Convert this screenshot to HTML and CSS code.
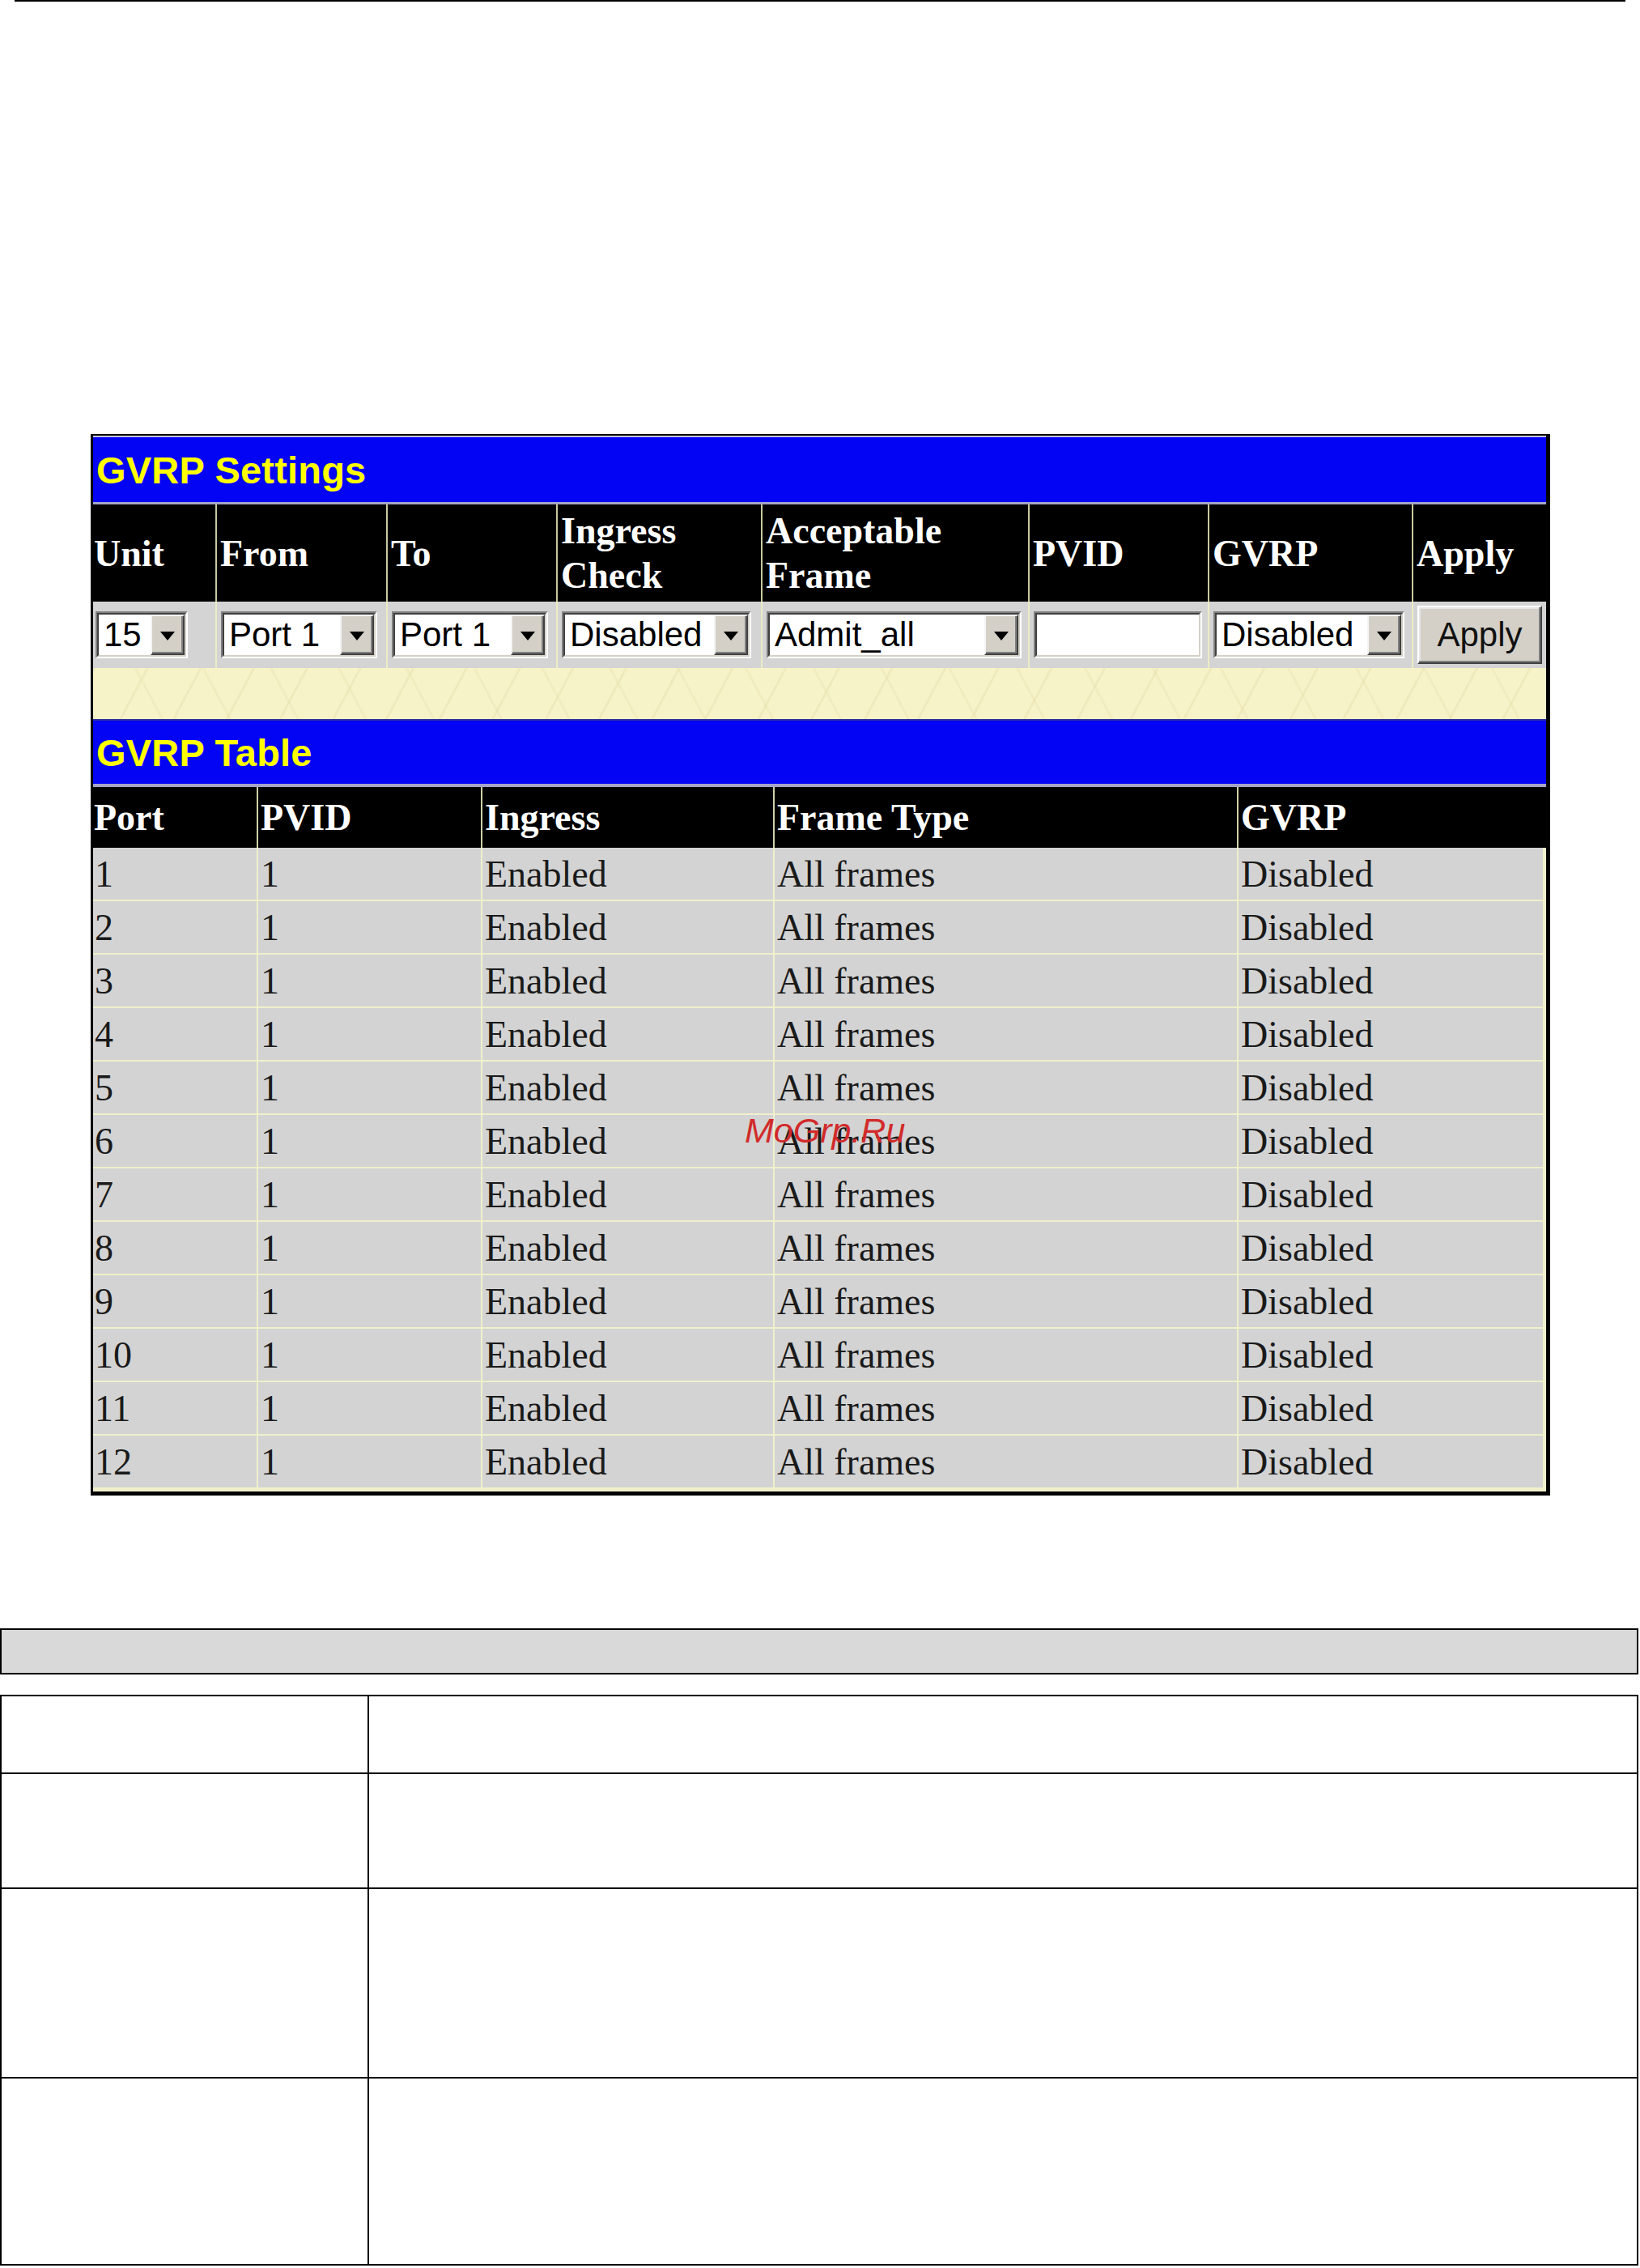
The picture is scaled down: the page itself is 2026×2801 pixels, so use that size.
FILE: index.html
```html
<!DOCTYPE html>
<html>
<head>
<meta charset="utf-8">
<title>GVRP Settings</title>
<link rel="stylesheet" href="styles.css">
</head>
<body>
<div class="page">
  <div class="topline"></div>

  <section class="panel">
    <div class="titlebar title-top"><span>GVRP Settings</span></div>

    <div class="srow shead">
      <div class="cell">Unit</div>
      <div class="cell">From</div>
      <div class="cell">To</div>
      <div class="cell">Ingress<br>Check</div>
      <div class="cell">Acceptable<br>Frame</div>
      <div class="cell">PVID</div>
      <div class="cell">GVRP</div>
      <div class="cell">Apply</div>
    </div>

    <div class="srow sinput">
      <div class="cell"><div class="sel w-unit"><div class="sel-in"><span class="sel-val">15</span><span class="sel-btn"><i class="tri"></i></span></div></div></div>
      <div class="cell"><div class="sel w-port"><div class="sel-in"><span class="sel-val">Port 1</span><span class="sel-btn"><i class="tri"></i></span></div></div></div>
      <div class="cell"><div class="sel w-port"><div class="sel-in"><span class="sel-val">Port 1</span><span class="sel-btn"><i class="tri"></i></span></div></div></div>
      <div class="cell"><div class="sel w-ing"><div class="sel-in"><span class="sel-val">Disabled</span><span class="sel-btn"><i class="tri"></i></span></div></div></div>
      <div class="cell"><div class="sel w-acc"><div class="sel-in"><span class="sel-val">Admit_all</span><span class="sel-btn"><i class="tri"></i></span></div></div></div>
      <div class="cell"><div class="sel w-pvid"><div class="sel-in"><span class="sel-val"></span></div></div></div>
      <div class="cell"><div class="sel w-gvrp"><div class="sel-in"><span class="sel-val">Disabled</span><span class="sel-btn"><i class="tri"></i></span></div></div></div>
      <div class="cell"><div class="btn">Apply</div></div>
    </div>

    <div class="pattern"></div>

    <div class="titlebar title-bottom"><span>GVRP Table</span></div>

    <div class="grow ghead">
      <div class="cell">Port</div>
      <div class="cell">PVID</div>
      <div class="cell">Ingress</div>
      <div class="cell">Frame Type</div>
      <div class="cell">GVRP</div>
    </div>

    <div class="gbody">
      <div class="grow gdata"><div class="cell">1</div><div class="cell">1</div><div class="cell">Enabled</div><div class="cell">All frames</div><div class="cell">Disabled</div></div>
      <div class="grow gdata"><div class="cell">2</div><div class="cell">1</div><div class="cell">Enabled</div><div class="cell">All frames</div><div class="cell">Disabled</div></div>
      <div class="grow gdata"><div class="cell">3</div><div class="cell">1</div><div class="cell">Enabled</div><div class="cell">All frames</div><div class="cell">Disabled</div></div>
      <div class="grow gdata"><div class="cell">4</div><div class="cell">1</div><div class="cell">Enabled</div><div class="cell">All frames</div><div class="cell">Disabled</div></div>
      <div class="grow gdata"><div class="cell">5</div><div class="cell">1</div><div class="cell">Enabled</div><div class="cell">All frames</div><div class="cell">Disabled</div></div>
      <div class="grow gdata"><div class="cell">6</div><div class="cell">1</div><div class="cell">Enabled</div><div class="cell">All frames</div><div class="cell">Disabled</div></div>
      <div class="grow gdata"><div class="cell">7</div><div class="cell">1</div><div class="cell">Enabled</div><div class="cell">All frames</div><div class="cell">Disabled</div></div>
      <div class="grow gdata"><div class="cell">8</div><div class="cell">1</div><div class="cell">Enabled</div><div class="cell">All frames</div><div class="cell">Disabled</div></div>
      <div class="grow gdata"><div class="cell">9</div><div class="cell">1</div><div class="cell">Enabled</div><div class="cell">All frames</div><div class="cell">Disabled</div></div>
      <div class="grow gdata"><div class="cell">10</div><div class="cell">1</div><div class="cell">Enabled</div><div class="cell">All frames</div><div class="cell">Disabled</div></div>
      <div class="grow gdata"><div class="cell">11</div><div class="cell">1</div><div class="cell">Enabled</div><div class="cell">All frames</div><div class="cell">Disabled</div></div>
      <div class="grow gdata"><div class="cell">12</div><div class="cell">1</div><div class="cell">Enabled</div><div class="cell">All frames</div><div class="cell">Disabled</div></div>
    </div>
  </section>

  <div class="mark">MoGrp.Ru</div>

  <div class="graybar"></div>

  <div class="desc">
    <div class="drow r1"><div class="dl"></div><div class="dr"></div></div>
    <div class="drow r2"><div class="dl"></div><div class="dr"></div></div>
    <div class="drow r3"><div class="dl"></div><div class="dr"></div></div>
    <div class="drow r4"><div class="dl"></div><div class="dr"></div></div>
  </div>
</div>
</body>
</html>
```

FILE: styles.css
```css
* { box-sizing: border-box; }

html, body {
  margin: 0;
  padding: 0;
  background: #ffffff;
}

.page {
  position: relative;
  width: 2026px;
  min-height: 2801px;
  font-family: "Liberation Serif", "Times New Roman", serif;
}

.topline {
  margin-left: 18px;
  width: 1990px;
  height: 2px;
  background: #000;
}

/* ---------- panel ---------- */
.panel {
  margin-top: 534px;
  margin-left: 112px;
  width: 1803px;
  border-style: solid;
  border-color: #000;
  border-width: 2px 5px 5px 3px;
  background: #d3d3d3;
}

.titlebar {
  display: flex;
  align-items: center;
  padding-left: 4px;
  background: #0404f4;
  color: #ffff00;
  font-family: "Liberation Sans", Arial, sans-serif;
  font-weight: bold;
  font-size: 47px;
  letter-spacing: 0.2px;
}

.title-top {
  height: 85px;
  border-top: 2px solid #c4c4dc;
  border-bottom: 3px solid #a4a4c8;
}

.title-bottom {
  height: 84px;
  border-top: 2px solid #3030a0;
  border-bottom: 4px solid #a4a4c8;
}

/* settings rows */
.srow {
  display: grid;
  grid-template-columns: 151px 211px 210px 253px 330px 222px 252px 166px;
}

.shead {
  height: 120px;
  background: #000;
  color: #fff;
  font-weight: bold;
  font-size: 46px;
  line-height: 55px;
}

.shead .cell {
  display: flex;
  align-items: center;
  padding-left: 4px;
  border-left: 2px solid #c8c8a0;
}

.shead .cell:first-child {
  border-left: none;
  padding-left: 1px;
}

.sinput {
  height: 82px;
  background: #d4d4d4;
}

.sinput .cell {
  display: flex;
  align-items: center;
  padding-left: 5px;
  border-left: 2px solid #ececc6;
}

.sinput .cell:first-child {
  border-left: none;
  padding-left: 3px;
}

/* select controls */
.sel {
  height: 58px;
  border: 2px solid;
  border-color: #808080 #ffffff #ffffff #808080;
  background: #fff;
}

.sel-in {
  display: flex;
  height: 100%;
  border: 2px solid;
  border-color: #404040 #d4d0c8 #d4d0c8 #404040;
}

.sel-val {
  flex: 1;
  display: flex;
  align-items: center;
  padding-left: 6px;
  font-family: "Liberation Sans", Arial, sans-serif;
  font-size: 42px;
  color: #000;
  white-space: nowrap;
  overflow: hidden;
}

.sel-btn {
  width: 42px;
  height: 100%;
  display: flex;
  align-items: center;
  justify-content: center;
  background: #d4d0c8;
  border: 2px solid;
  border-color: #f4f4f4 #404040 #404040 #f4f4f4;
  box-shadow: inset -2px -2px 0 #808080;
}

.tri {
  display: block;
  width: 0;
  height: 0;
  margin-top: 2px;
  border-left: 9px solid transparent;
  border-right: 9px solid transparent;
  border-top: 11px solid #000;
}

.w-unit { width: 114px; }
.w-port { width: 193px; }
.w-ing { width: 234px; }
.w-acc { width: 315px; }
.w-pvid { width: 208px; }
.w-gvrp { width: 236px; }

.btn {
  width: 154px;
  height: 72px;
  display: flex;
  align-items: center;
  justify-content: center;
  background: #d4d0c8;
  border: 2px solid;
  border-color: #ffffff #404040 #404040 #ffffff;
  box-shadow: inset -2px -2px 0 #808080, inset 2px 2px 0 #e6e6e6;
  font-family: "Liberation Sans", Arial, sans-serif;
  font-size: 42px;
  color: #111;
}

.pattern {
  height: 63px;
  background-color: #f7f3c9;
  background-image:
    repeating-linear-gradient(118deg, rgba(230, 224, 172, 0.45) 0 3px, transparent 3px 58px),
    repeating-linear-gradient(62deg, rgba(230, 224, 172, 0.35) 0 3px, transparent 3px 74px);
}

/* gvrp table */
.grow {
  display: grid;
  grid-template-columns: 202px 277px 361px 573px 382px;
}

.ghead {
  height: 75px;
  background: #000;
  color: #fff;
  font-weight: bold;
  font-size: 46px;
}

.ghead .cell {
  display: flex;
  align-items: center;
  padding-left: 3px;
  border-left: 2px solid #d0d0a8;
}

.ghead .cell:first-child {
  border-left: none;
  padding-left: 1px;
}

.gbody {
  padding-bottom: 3px;
  background: #f0f0cc;
}

.gdata {
  height: 66px;
  background: #d3d3d3;
  border-bottom: 2px solid #f0f0cc;
  font-size: 46px;
  color: #1a1a1a;
}

.gdata .cell {
  display: flex;
  align-items: center;
  padding-left: 3px;
  border-left: 2px solid #f0f0cc;
  white-space: nowrap;
}

.gdata .cell:first-child {
  border-left: none;
  padding-left: 2px;
}

.gdata .cell:last-child {
  border-right: 4px solid #f0f0cc;
}

/* watermark */
.mark {
  position: absolute;
  left: 920px;
  top: 1375px;
  font-family: "Liberation Sans", Arial, sans-serif;
  font-style: italic;
  font-size: 43px;
  line-height: 1;
  color: #d22a2a;
}

/* description section */
.graybar {
  margin-top: 164px;
  width: 2024px;
  height: 57px;
  border: 2px solid #000;
  background: #d9d9d9;
}

.desc {
  margin-top: 25px;
  width: 2024px;
  border-top: 2px solid #000;
  border-left: 2px solid #000;
  border-right: 2px solid #000;
}

.drow {
  display: grid;
  grid-template-columns: 454px 1fr;
  border-bottom: 2px solid #000;
}

.dl {
  border-right: 2px solid #000;
}

.r1 { height: 96px; }
.r2 { height: 142px; }
.r3 { height: 234px; }
.r4 { height: 231px; }
```
